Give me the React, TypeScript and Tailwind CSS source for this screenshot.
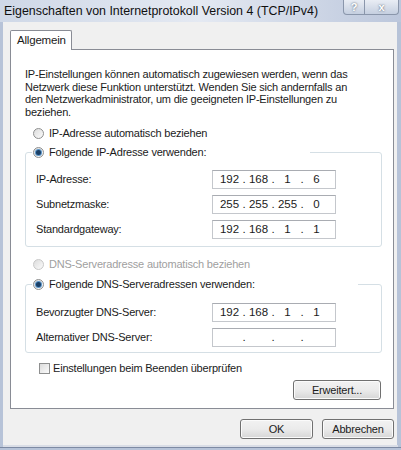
import React from 'react';

const font = { fontFamily: '"Liberation Sans", Arial, sans-serif' };

function Radio({ checked = false, disabled = false }: { checked?: boolean; disabled?: boolean }) {
  return (
    <div
      className={`flex h-[11px] w-[11px] shrink-0 items-center justify-center rounded-full border bg-gradient-to-br from-[#dcdcdc] to-[#fbfbfb] ${
        disabled ? 'border-[#c8c8c8]' : 'border-[#8e8f8f]'
      }`}
    >
      {checked && <div className="h-[5px] w-[5px] rounded-full bg-[#1a3f66] ring-1 ring-[#5a94c8]" />}
    </div>
  );
}

function IpBox({ parts }: { parts: string[] }) {
  return (
    <div className="flex h-[19px] w-[124px] items-center border border-[#c4c7cc] border-t-[#a9acb2] bg-white pl-[4px] text-[11.5px] tracking-normal text-[#1b1b1b]">
      {parts.map((p, i) => (
        <React.Fragment key={i}>
          <span className="w-[25px] text-center">{p}</span>
          {i < 3 && <span className="w-[4px] text-center">.</span>}
        </React.Fragment>
      ))}
    </div>
  );
}

function Row({ label, parts, first = false }: { label: string; parts: string[]; first?: boolean }) {
  return (
    <div className={`flex items-center ${first ? '' : 'mt-[6px]'}`}>
      <span className="w-[186px] pl-[10px]">{label}</span>
      <IpBox parts={parts} />
    </div>
  );
}

function Button({ children, className = '' }: { children: React.ReactNode; className?: string }) {
  return (
    <div
      className={`flex h-[20px] items-center justify-center rounded-[3px] border border-[#707070] bg-gradient-to-b from-[#f2f2f2] via-[#ebebeb] to-[#d6d6d6] text-[11px] tracking-[-0.2px] text-[#1b1b1b] shadow-[inset_0_0_0_1px_#fbfbfb] ${className}`}
    >
      {children}
    </div>
  );
}

export default function App() {
  return (
    <div className="flex h-[450px] w-[401px] flex-col bg-[#b7c3d8]" style={font}>
      {/* Title bar */}
      <div className="flex h-[22px] items-start justify-between bg-gradient-to-r from-[#cfd8e7] via-[#e4e9f2] to-[#bcc7dc]">
        <span className="ml-[4px] mt-[4px] whitespace-nowrap text-[12.4px] leading-[15px] text-[#101010]">
          Eigenschaften von Internetprotokoll Version 4 (TCP/IPv4)
        </span>
        <div className="mr-[2px] flex h-[15px]">
          <div className="flex w-[22px] items-center justify-center rounded-bl-[4px] border border-t-0 border-[#8a96ab] bg-gradient-to-b from-[#e9edf4] to-[#c5cfe0] text-[11px] font-bold leading-none text-white [text-shadow:0_0_2px_#44505f]">
            ?
          </div>
          <div className="flex w-[34px] items-center justify-center rounded-br-[4px] border border-l-0 border-t-0 border-[#8a96ab] bg-gradient-to-b from-[#e9edf4] to-[#c5cfe0] text-[11px] font-bold leading-none text-white [text-shadow:0_0_2px_#44505f]">
            x
          </div>
        </div>
      </div>

      {/* Body */}
      <div className="mx-[3px] flex h-[423px] w-[394px] flex-col bg-[#f0f0f0] text-[11px] tracking-[-0.2px] text-[#1b1b1b]">
        <div className="relative z-10 -mb-px ml-[7px] mt-[8px] flex h-[20px] w-[62px] items-center rounded-t-[2px] border border-b-0 border-[#898c95] bg-white pl-[6px] text-[11.5px]">
          Allgemein
        </div>
        <div className="ml-[7px] flex h-[360px] w-[384px] flex-col border border-[#898c95] bg-white">
          <p className="ml-[14px] mt-[18px] leading-[12.5px]">
            IP-Einstellungen können automatisch zugewiesen werden, wenn das
            <br />
            Netzwerk diese Funktion unterstützt. Wenden Sie sich andernfalls an
            <br />
            den Netzwerkadministrator, um die geeigneten IP-Einstellungen zu
            <br />
            beziehen.
          </p>

          <div className="ml-[22px] mt-[8px] flex h-[14px] items-center gap-[5px]">
            <Radio />
            <span>IP-Adresse automatisch beziehen</span>
          </div>

          <div className="relative z-10 ml-[21px] mt-[5px] flex h-[14px] w-[278px] items-center gap-[5px] bg-white pl-px">
            <Radio checked />
            <span>Folgende IP-Adresse verwenden:</span>
          </div>
          <div className="-mt-[7px] ml-[14px] flex h-[95px] w-[357px] flex-col rounded-[3px] border border-[#d5dfe5] pt-[17px]">
            <Row first label="IP-Adresse:" parts={['192', '168', '1', '6']} />
            <Row label="Subnetzmaske:" parts={['255', '255', '255', '0']} />
            <Row label="Standardgateway:" parts={['192', '168', '1', '1']} />
          </div>

          <div className="ml-[22px] mt-[10px] flex h-[14px] items-center gap-[5px] text-[#a0a0a0]">
            <Radio disabled />
            <span>DNS-Serveradresse automatisch beziehen</span>
          </div>

          <div className="relative z-10 ml-[21px] mt-[6px] flex h-[14px] w-[326px] items-center gap-[5px] bg-white pl-px">
            <Radio checked />
            <span>Folgende DNS-Serveradressen verwenden:</span>
          </div>
          <div className="-mt-[7px] ml-[14px] flex h-[69px] w-[357px] flex-col rounded-[3px] border border-[#d5dfe5] pt-[18px]">
            <Row first label="Bevorzugter DNS-Server:" parts={['192', '168', '1', '1']} />
            <Row label="Alternativer DNS-Server:" parts={['', '', '', '']} />
          </div>

          <div className="ml-[28px] mt-[8px] flex h-[14px] items-center gap-[3px]">
            <div className="h-[11px] w-[11px] border border-[#8e8f8f] bg-gradient-to-br from-[#dcdcdc] to-[#fbfbfb]" />
            <span>Einstellungen beim Beenden überprüfen</span>
          </div>

          <Button className="ml-[282px] mt-[5px] w-[88px]">Erweitert...</Button>
        </div>

        <div className="mt-[10px] flex justify-end gap-[9px] pr-[3px]">
          <Button className="w-[73px]">OK</Button>
          <Button className="w-[72px]">Abbrechen</Button>
        </div>
      </div>
      <div className="mx-[3px] h-[2px] bg-[#d9dde6]" />
      <div className="flex-1 border-t border-[#7d8aa3] bg-[#b7c3d8]" />
    </div>
  );
}
